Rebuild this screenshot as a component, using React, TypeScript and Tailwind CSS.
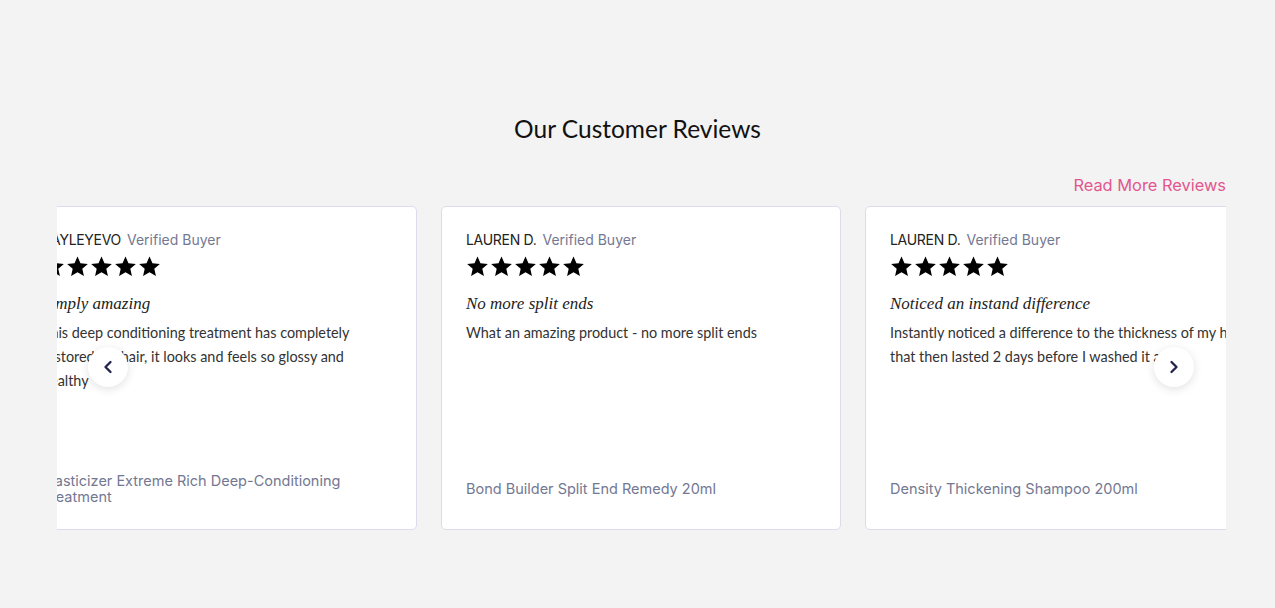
import React from 'react';
import { ChevronLeft, ChevronRight } from 'lucide-react';

const reviews = [
  {
    name: 'KAYLEYEVO',
    title: 'Simply amazing',
    body: 'This deep conditioning treatment has completely restored my hair, it looks and feels so glossy and\nhealthy',
    product: 'Plasticizer Extreme Rich Deep-Conditioning Treatment',
  },
  {
    name: 'LAUREN D.',
    title: 'No more split ends',
    body: 'What an amazing product - no more split ends',
    product: 'Bond Builder Split End Remedy 20ml',
  },
  {
    name: 'LAUREN D.',
    title: 'Noticed an instand difference',
    body: 'Instantly noticed a difference to the thickness of my hair that then lasted 2 days before I washed it again',
    product: 'Density Thickening Shampoo 200ml',
  },
];

function Star() {
  return (
    <svg viewBox="0 0 24 24" className="w-[23px] h-[23px]" fill="#000">
      <path d="M12 1.5l3.1 7.1 7.7.7-5.8 5.1 1.7 7.6L12 18l-6.7 4 1.7-7.6L1.2 9.3l7.7-.7z" />
    </svg>
  );
}

function ReviewCard({ r }: { r: (typeof reviews)[number] }) {
  return (
    <div className="w-[400px] h-[324px] shrink-0 bg-white border border-[#dcdcec] rounded-[5px] pl-[24px] pr-[16px] pt-[22px] flex flex-col">
      <div className="flex items-baseline gap-[6px] font-['Inter',sans-serif]">
        <span className="text-[14px] text-[#222] tracking-[-0.3px]">{r.name}</span>
        <span className="text-[14px] text-[#737892]">Verified Buyer</span>
      </div>
      <div className="flex gap-[1px] mt-[5px]">
        {[0, 1, 2, 3, 4].map((i) => (
          <Star key={i} />
        ))}
      </div>
      <div className="mt-[14px] text-[17px] italic text-[#222] font-['Liberation_Serif',serif] leading-[24px]">
        {r.title}
      </div>
      <p className="mt-[5px] pr-[4px] whitespace-pre-line text-[14.4px] leading-[24px] text-[#333] font-['Lato',sans-serif]">
        {r.body}
      </p>
      <div className="flex-1" />
      <div className="h-[36px] mb-[22px] flex items-center">
        <span className="text-[14.5px] leading-[16px] text-[#737892] font-['Inter',sans-serif]">{r.product}</span>
      </div>
    </div>
  );
}

export default function App() {
  return (
    <div className="min-h-screen bg-[#f3f3f3] pt-[113px]">
      <h2 className="text-center text-[24.5px] leading-[32px] text-[#111] font-['Lato',sans-serif]">
        Our Customer Reviews
      </h2>

      <div className="w-[1169px] ml-[57px] mt-[30px]">
        <div className="flex justify-end">
          <a className="text-[16.4px] text-[#e2568e] font-['Inter',sans-serif] leading-[20px]">Read More Reviews</a>
        </div>

        <div className="relative mt-[11px]">
          <div className="overflow-hidden">
            <div className="flex gap-[24px] -ml-[40px]">
              {reviews.map((r, i) => (
                <ReviewCard key={i} r={r} />
              ))}
            </div>
          </div>

          <button className="absolute left-[31px] top-[141px] w-[40px] h-[40px] rounded-full bg-white shadow-[0_2px_10px_rgba(0,0,0,0.12)] flex items-center justify-center text-[#23234f]">
            <ChevronLeft className="w-[20px] h-[20px]" strokeWidth={2.8} />
          </button>
          <button className="absolute left-[1097px] top-[141px] w-[40px] h-[40px] rounded-full bg-white shadow-[0_2px_10px_rgba(0,0,0,0.12)] flex items-center justify-center text-[#23234f]">
            <ChevronRight className="w-[20px] h-[20px]" strokeWidth={2.8} />
          </button>
        </div>
      </div>
    </div>
  );
}
